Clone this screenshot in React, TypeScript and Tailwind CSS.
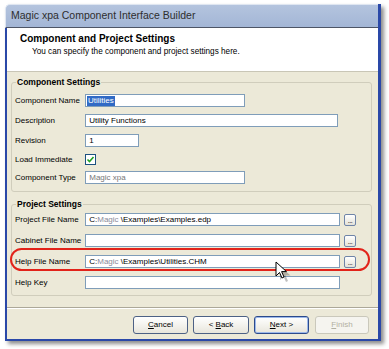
import React from "react";

const Field = ({ w, children, gray }: { w: number; children?: React.ReactNode; gray?: boolean }) => (
  <div
    className={`h-[13px] border border-[#7f9db9] bg-white flex items-center pl-[1px] text-[8px] leading-none whitespace-nowrap overflow-hidden ${gray ? "text-[#777]" : "text-black"}`}
    style={{ width: w }}
  >
    {children}
  </div>
);

const Row = ({ label, children, cls }: { label: string; children: React.ReactNode; cls?: string }) => (
  <div className={`flex items-center ${cls ?? ""}`}>
    <div className="w-[70px] text-[8px] leading-none whitespace-nowrap">{label}</div>
    {children}
  </div>
);

const Dots = () => (
  <div className="ml-[4px] w-[12px] h-[12px] rounded-[2px] border border-[#6f84a8] bg-gradient-to-b from-white to-[#e4e2d8] flex items-end justify-center pb-[1px]">
    <span className="text-[7px] leading-none tracking-[-0.5px]">...</span>
  </div>
);

const Btn = ({ children, w, cls }: { children: React.ReactNode; w: number; cls?: string }) => (
  <div
    className={`h-[18px] rounded-[3px] border flex items-center justify-center text-[8px] leading-none ${cls ?? ""}`}
    style={{ width: w }}
  >
    {children}
  </div>
);

export default function App() {
  return (
    <div className="relative w-[389px] h-[349px] bg-white overflow-hidden font-['Liberation_Sans',Arial,sans-serif] text-black">
      <div className="ml-[5px] mt-[4px] w-[376px] h-[337px] flex flex-col border-r-[3px] border-[#2a48a8] shadow-[3px_3px_4px_rgba(0,0,0,0.45)]">
        {/* title bar */}
        <div className="h-[24px] flex items-center pl-[5px] bg-gradient-to-b from-[#b4c4de] to-[#a3b6d6] border-t border-l border-[#dfe6f1] border-b border-b-[#4d5566] rounded-tl-[5px] text-[10.5px] text-[#2e2e2e] whitespace-nowrap">
          Magic xpa Component Interface Builder
        </div>
        <div className="flex-1 flex flex-col border-l-2 border-b-2 border-[#2a48a8]">
          {/* header */}
          <div className="h-[44px] bg-white border-b border-[#c9c6b6] flex flex-col">
            <div className="pl-[13px] pt-[5px] text-[10px] leading-[12px] font-bold whitespace-nowrap">
              Component and Project Settings
            </div>
            <div className="pl-[25px] mt-[2px] text-[8.2px] leading-[10px] whitespace-nowrap">
              You can specify the component and project settings here.
            </div>
          </div>
          {/* body */}
          <div className="flex-1 bg-[#ece9d8] flex flex-col">
            <div className="pl-[4px] pr-[6px]">
              <fieldset className="mt-[5px] border border-[#d0cdbc] rounded-[3px] pl-[3px] pb-[7px]">
                <legend className="ml-[1px] px-[1px] text-[8.5px] leading-[11px] font-bold">Component Settings</legend>
                <div className="flex flex-col pt-[6px]">
                  <Row label="Component Name">
                    <Field w={160}>
                      <span className="bg-[#316ac5] text-white h-[10px] flex items-center px-[1px]">Utilities</span>
                    </Field>
                  </Row>
                  <Row label="Description" cls="mt-[7px]">
                    <Field w={253}>&nbsp;Utility Functions</Field>
                  </Row>
                  <Row label="Revision" cls="mt-[7px]">
                    <Field w={54}>&nbsp;1</Field>
                  </Row>
                  <Row label="Load Immediate" cls="mt-[6px] h-[13px]">
                    <div className="w-[11px] h-[11px] border border-[#1c5180] bg-white flex items-center justify-center">
                      <svg width="9" height="9" viewBox="0 0 9 9">
                        <path d="M1.5 4.5 L3.5 6.5 L7.5 2" fill="none" stroke="#21a121" strokeWidth="1.6" />
                      </svg>
                    </div>
                  </Row>
                  <Row label="Component Type" cls="mt-[5px]">
                    <Field w={160} gray>&nbsp;Magic xpa</Field>
                  </Row>
                </div>
              </fieldset>
              <fieldset className="mt-[7px] border border-[#d0cdbc] rounded-[3px] pl-[3px] pb-[6px]">
                <legend className="ml-[1px] px-[1px] text-[8.5px] leading-[11px] font-bold">Project Settings</legend>
                <div className="flex flex-col pt-[3px]">
                  <Row label="Project File Name">
                    <Field w={255}>
                      &nbsp;C:<span className="text-[#8a8a9a]">Magic</span>&nbsp;\Examples\Examples.edp
                    </Field>
                    <Dots />
                  </Row>
                  <Row label="Cabinet File Name" cls="mt-[8px]">
                    <Field w={255} />
                    <Dots />
                  </Row>
                  <Row label="Help File Name" cls="mt-[8px]">
                    <Field w={255}>
                      &nbsp;C:<span className="text-[#8a8a9a]">Magic</span>&nbsp;\Examples\Utilities.CHM
                    </Field>
                    <Dots />
                  </Row>
                  <Row label="Help Key" cls="mt-[8px]">
                    <Field w={255} />
                  </Row>
                </div>
              </fieldset>
            </div>
            {/* footer */}
            <div className="mt-[11px] h-px bg-[#aca899]" />
            <div className="h-px bg-white" />
            <div className="mt-[7px] flex justify-end pr-[9px]">
              <Btn w={55} cls="border-[#4d6185] bg-gradient-to-b from-white to-[#e8e6dc]">
                <span><u>C</u>ancel</span>
              </Btn>
              <Btn w={56} cls="ml-[5px] border-[#4d6185] bg-gradient-to-b from-white to-[#e8e6dc]">
                <span>&lt; <u>B</u>ack</span>
              </Btn>
              <Btn w={55} cls="ml-[5px] border-[#2c4a8c] bg-gradient-to-b from-white to-[#e8e6dc] shadow-[inset_0_0_0_1px_#9cb8ea]">
                <span><u>N</u>ext &gt;</span>
              </Btn>
              <Btn w={54} cls="ml-[6px] border-[#cac8bb] bg-[#f5f4ef] text-[#b3b0a2]">
                <span><u>F</u>inish</span>
              </Btn>
            </div>
          </div>
        </div>
      </div>
      {/* red highlight */}
      <div className="absolute left-[10px] top-[248px] w-[360px] h-[23px] rounded-full border-2 border-[#e2231a]" />
      {/* cursor */}
      <svg className="absolute left-[275px] top-[261px]" width="18" height="22" viewBox="0 0 18 22">
        <path d="M3 3 L3 17 L6.5 13.5 L9 19 L11 18 L8.6 12.6 L13.5 12.6 Z" fill="rgba(0,0,0,0.25)" transform="translate(2,2)" />
        <path d="M1 1 L1 15 L4.5 11.5 L7 17 L9 16 L6.6 10.6 L11.5 10.6 Z" fill="white" stroke="black" strokeWidth="1" strokeLinejoin="round" />
      </svg>
    </div>
  );
}
